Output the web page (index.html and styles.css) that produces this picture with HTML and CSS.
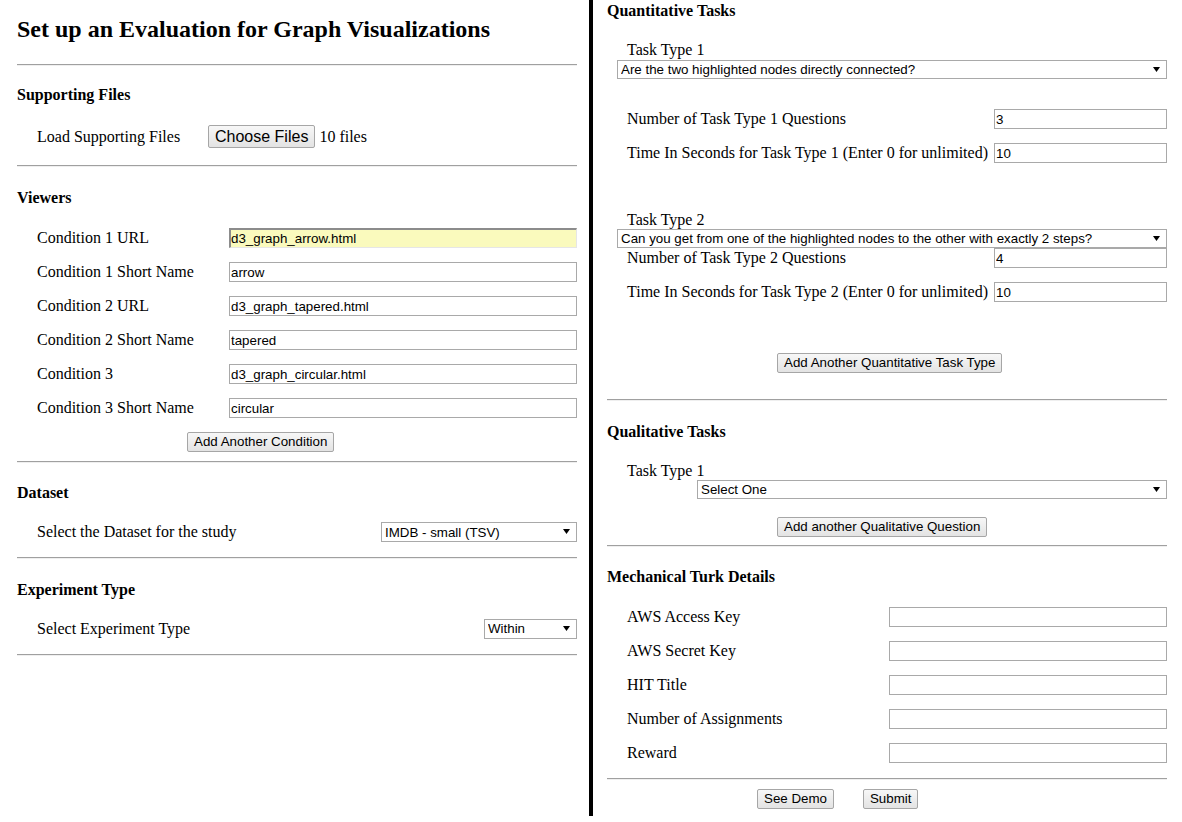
FILE: index.html
```html
<!DOCTYPE html>
<html>
<head>
<meta charset="utf-8">
<title>Set up an Evaluation for Graph Visualizations</title>
<link rel="stylesheet" href="styles.css">
</head>
<body>
<div class="page">
  <div class="col col-left">
    <h2 class="title">Set up an Evaluation for Graph Visualizations</h2>
    <hr class="rule">

    <h4 class="sec-title sec-files">Supporting Files</h4>
    <div class="files-row">
      <span class="label">Load Supporting Files</span>
      <button class="btn btn-big">Choose Files</button>
      <span class="file-count">10 files</span>
    </div>
    <hr class="rule rule-files">

    <h4 class="sec-title sec-viewers">Viewers</h4>
    <div class="viewers">
      <div class="field"><span class="label">Condition 1 URL</span><input class="text text-wide autofill" value="d3_graph_arrow.html"></div>
      <div class="field"><span class="label">Condition 1 Short Name</span><input class="text text-wide" value="arrow"></div>
      <div class="field"><span class="label">Condition 2 URL</span><input class="text text-wide" value="d3_graph_tapered.html"></div>
      <div class="field"><span class="label">Condition 2 Short Name</span><input class="text text-wide" value="tapered"></div>
      <div class="field"><span class="label">Condition 3</span><input class="text text-wide" value="d3_graph_circular.html"></div>
      <div class="field field-last"><span class="label">Condition 3 Short Name</span><input class="text text-wide" value="circular"></div>
      <button class="btn btn-offset">Add Another Condition</button>
    </div>
    <hr class="rule rule-viewers">

    <h4 class="sec-title">Dataset</h4>
    <div class="field field-select">
      <span class="label">Select the Dataset for the study</span>
      <div class="select-wrap sel-dataset">
        <select class="select"><option>IMDB - small (TSV)</option></select>
        <svg class="arrow" width="7" height="5" viewBox="0 0 7 5"><path d="M0 0H7L3.5 5Z" fill="#000"/></svg>
      </div>
    </div>
    <hr class="rule rule-select">

    <h4 class="sec-title">Experiment Type</h4>
    <div class="field field-select">
      <span class="label">Select Experiment Type</span>
      <div class="select-wrap sel-exp">
        <select class="select"><option>Within</option></select>
        <svg class="arrow" width="7" height="5" viewBox="0 0 7 5"><path d="M0 0H7L3.5 5Z" fill="#000"/></svg>
      </div>
    </div>
    <hr class="rule rule-select">
  </div>

  <div class="col col-right">
    <h4 class="sec-title sec-first">Quantitative Tasks</h4>
    <div class="task-label task-label-1">Task Type 1</div>
    <div class="select-wrap sel-task">
      <select class="select"><option>Are the two highlighted nodes directly connected?</option></select>
      <svg class="arrow" width="7" height="5" viewBox="0 0 7 5"><path d="M0 0H7L3.5 5Z" fill="#000"/></svg>
    </div>
    <div class="task-fields task-fields-1">
      <div class="field"><span class="label">Number of Task Type 1 Questions</span><input class="text text-num" value="3"></div>
      <div class="field"><span class="label">Time In Seconds for Task Type 1 (Enter 0 for unlimited)</span><input class="text text-num" value="10"></div>
    </div>
    <div class="task-label task-label-2">Task Type 2</div>
    <div class="select-wrap sel-task sel-task-2">
      <select class="select"><option>Can you get from one of the highlighted nodes to the other with exactly 2 steps?</option></select>
      <svg class="arrow" width="7" height="5" viewBox="0 0 7 5"><path d="M0 0H7L3.5 5Z" fill="#000"/></svg>
    </div>
    <div class="task-fields">
      <div class="field"><span class="label">Number of Task Type 2 Questions</span><input class="text text-num" value="4"></div>
      <div class="field"><span class="label">Time In Seconds for Task Type 2 (Enter 0 for unlimited)</span><input class="text text-num" value="10"></div>
    </div>
    <button class="btn btn-offset btn-quant">Add Another Quantitative Task Type</button>
    <hr class="rule rule-quant">

    <h4 class="sec-title">Qualitative Tasks</h4>
    <div class="task-label task-label-q">Task Type 1</div>
    <div class="select-wrap sel-qual">
      <select class="select"><option>Select One</option></select>
      <svg class="arrow" width="7" height="5" viewBox="0 0 7 5"><path d="M0 0H7L3.5 5Z" fill="#000"/></svg>
    </div>
    <button class="btn btn-offset btn-qual">Add another Qualitative Question</button>
    <hr class="rule rule-qual">

    <h4 class="sec-title">Mechanical Turk Details</h4>
    <div class="turk">
      <div class="field"><span class="label">AWS Access Key</span><input class="text text-turk" value=""></div>
      <div class="field"><span class="label">AWS Secret Key</span><input class="text text-turk" value=""></div>
      <div class="field"><span class="label">HIT Title</span><input class="text text-turk" value=""></div>
      <div class="field"><span class="label">Number of Assignments</span><input class="text text-turk" value=""></div>
      <div class="field"><span class="label">Reward</span><input class="text text-turk" value=""></div>
    </div>
    <hr class="rule rule-turk">
    <div class="actions">
      <button class="btn">See Demo</button>
      <button class="btn">Submit</button>
    </div>
  </div>
</div>
</body>
</html>
```

FILE: styles.css
```css
html, body {
  margin: 0;
  padding: 0;
  background: #fff;
}

body {
  font-family: "Liberation Serif", "Times New Roman", serif;
  font-size: 16px;
  color: #000;
}

.page {
  display: flex;
  align-items: flex-start;
}

.col {
  width: 560px;
  flex: none;
}

.col-left {
  margin-left: 17px;
}

.col-right {
  margin-left: 12px;
  border-left: 4px solid #000;
  padding-left: 14px;
  padding-bottom: 7px;
}

.title {
  font-size: 24px;
  line-height: 28px;
  font-weight: bold;
  margin: 15px 0 21px;
}

.rule {
  margin: 0;
  height: 0;
  border: 0;
  border-top: 1px solid #a0a0a0;
  border-bottom: 1px solid #efefef;
}

.sec-title {
  font-size: 16px;
  line-height: 20px;
  font-weight: bold;
  margin: 20.5px 0 0;
}

.sec-files {
  margin-top: 19px;
}

.sec-viewers {
  margin-top: 21.5px;
}

.sec-first {
  margin-top: 1px;
}

.label {
  padding-left: 20px;
  line-height: 18px;
  flex: 1 1 auto;
  white-space: nowrap;
}

/* supporting files */
.files-row {
  display: flex;
  align-items: center;
  height: 23px;
  margin-top: 20px;
}

.files-row .label {
  flex: none;
  width: 171px;
}

.file-count {
  margin-left: 4px;
  line-height: 18px;
}

.rule-files {
  margin-top: 16.5px;
}

/* generic field rows */
.field {
  display: flex;
  align-items: center;
  justify-content: space-between;
  height: 20px;
  margin-bottom: 14px;
}

.text {
  box-sizing: border-box;
  height: 20px;
  border: 1px solid #a9a9a9;
  padding: 1px 1px;
  margin: 0;
  font-family: "Liberation Sans", Arial, sans-serif;
  font-size: 13.333px;
  color: #000;
  background: #fff;
  outline: none;
  flex: none;
}

.text-wide {
  width: 348px;
}

.autofill {
  background: #fafabd;
  border-style: solid;
  border-width: 2px 1px 1px 2px;
  border-color: #8c8c8c #e6e6e6 #e6e6e6 #8c8c8c;
  padding-left: 0;
}

.text-num {
  width: 173px;
}

.text-turk {
  width: 278px;
}

.viewers {
  margin-top: 20px;
}

.field-last {
  margin-bottom: 13.5px;
}

/* buttons */
.btn {
  box-sizing: border-box;
  height: 20px;
  padding: 0 6px;
  margin: 0;
  border: 1px solid #a6a6a6;
  border-radius: 2px;
  background: linear-gradient(#f7f7f7, #e3e3e3);
  font-family: "Liberation Sans", Arial, sans-serif;
  font-size: 13.333px;
  color: #000;
  line-height: 18px;
  display: block;
  flex: none;
}

.btn-big {
  height: 23px;
  font-size: 16px;
  padding: 0 6px;
  line-height: 21px;
}

.btn-offset {
  margin-left: 170px;
}

.rule-viewers {
  margin-top: 9px;
}

/* selects */
.select-wrap {
  position: relative;
  flex: none;
}

.select {
  -webkit-appearance: none;
  appearance: none;
  box-sizing: border-box;
  width: 100%;
  height: 20px;
  margin: 0;
  border: 1px solid #a9a9a9;
  border-radius: 0;
  background: #fff;
  padding: 0 20px 0 3px;
  font-family: "Liberation Sans", Arial, sans-serif;
  font-size: 13.333px;
  color: #000;
  outline: none;
  display: block;
}

.arrow {
  position: absolute;
  right: 7px;
  top: 7px;
  pointer-events: none;
}

.field-select {
  margin-top: 19px;
  margin-bottom: 0;
}

.sel-dataset {
  width: 196px;
}

.sel-exp {
  width: 93px;
}

.rule-select {
  margin-top: 15px;
}

/* right column */
.task-label {
  padding-left: 20px;
  line-height: 18px;
}

.task-label-1 {
  margin-top: 20px;
}

.sel-task {
  margin-top: 1px;
  margin-left: 10px;
}

.sel-task-2 {
  margin-top: 0;
}

.sel-task .select,
.sel-qual .select {
  height: 19px;
}

.sel-task .arrow,
.sel-qual .arrow {
  top: 7px;
}

.task-fields-1 {
  margin-top: 30px;
}

.task-fields .field:last-child {
  margin-bottom: 0;
}

.task-label-2 {
  margin-top: 48px;
}

.btn-quant {
  margin-top: 51px;
}

.rule-quant {
  margin-top: 26px;
}

.task-label-q {
  margin-top: 20px;
}

.sel-qual {
  margin-top: 0;
  margin-left: 90px;
}

.btn-qual {
  margin-top: 18px;
}

.rule-qual {
  margin-top: 8px;
}

.turk {
  margin-top: 19.5px;
}

.turk .field:last-child {
  margin-bottom: 0;
}

.rule-turk {
  margin-top: 15px;
}

.actions {
  display: flex;
  gap: 29px;
  margin-top: 9px;
  padding-left: 150px;
}
```
